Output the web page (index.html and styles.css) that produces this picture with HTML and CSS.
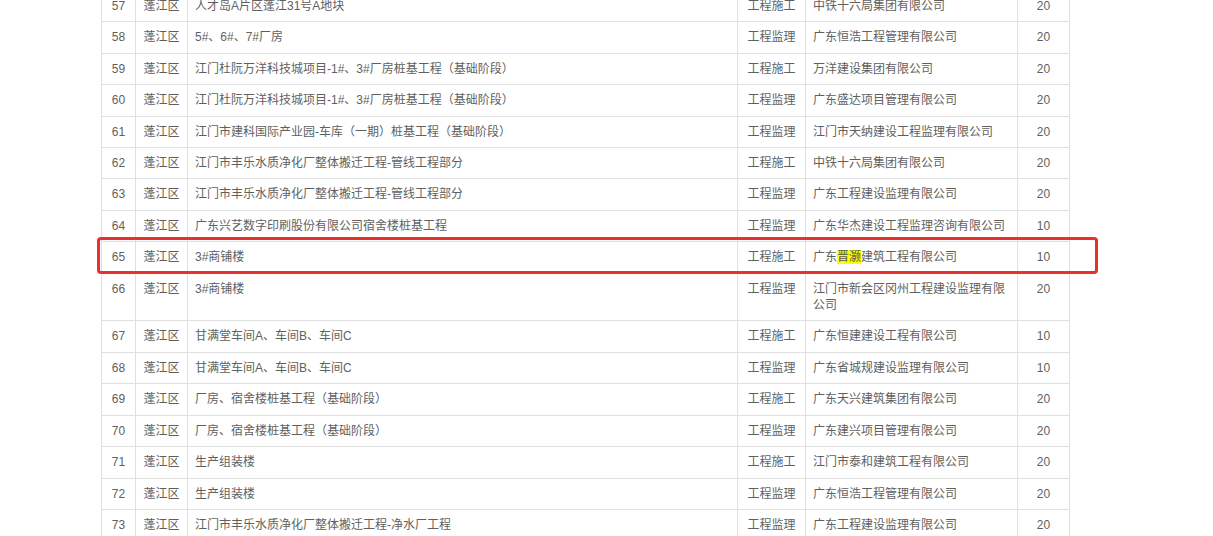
FILE: index.html
```html
<!DOCTYPE html>
<html lang="zh">
<head>
<meta charset="utf-8">
<link rel="stylesheet" href="styles.css">
</head>
<body>
<div class="wrap">
<table class="list">
<colgroup>
<col class="c-no"><col class="c-area"><col class="c-proj"><col class="c-type"><col class="c-comp"><col class="c-score">
</colgroup>
<tbody>
<tr><td class="ctr">57</td><td class="ctr">蓬江区</td><td>人才岛A片区蓬江31号A地块</td><td class="ctr">工程施工</td><td>中铁十六局集团有限公司</td><td class="ctr">20</td></tr>
<tr><td class="ctr">58</td><td class="ctr">蓬江区</td><td>5#、6#、7#厂房</td><td class="ctr">工程监理</td><td>广东恒浩工程管理有限公司</td><td class="ctr">20</td></tr>
<tr><td class="ctr">59</td><td class="ctr">蓬江区</td><td>江门杜阮万洋科技城项目-1#、3#厂房桩基工程（基础阶段）</td><td class="ctr">工程施工</td><td>万洋建设集团有限公司</td><td class="ctr">20</td></tr>
<tr><td class="ctr">60</td><td class="ctr">蓬江区</td><td>江门杜阮万洋科技城项目-1#、3#厂房桩基工程（基础阶段）</td><td class="ctr">工程监理</td><td>广东盛达项目管理有限公司</td><td class="ctr">20</td></tr>
<tr><td class="ctr">61</td><td class="ctr">蓬江区</td><td>江门市建科国际产业园-车库（一期）桩基工程（基础阶段）</td><td class="ctr">工程监理</td><td>江门市天纳建设工程监理有限公司</td><td class="ctr">20</td></tr>
<tr><td class="ctr">62</td><td class="ctr">蓬江区</td><td>江门市丰乐水质净化厂整体搬迁工程-管线工程部分</td><td class="ctr">工程施工</td><td>中铁十六局集团有限公司</td><td class="ctr">20</td></tr>
<tr><td class="ctr">63</td><td class="ctr">蓬江区</td><td>江门市丰乐水质净化厂整体搬迁工程-管线工程部分</td><td class="ctr">工程监理</td><td>广东工程建设监理有限公司</td><td class="ctr">20</td></tr>
<tr><td class="ctr">64</td><td class="ctr">蓬江区</td><td>广东兴艺数字印刷股份有限公司宿舍楼桩基工程</td><td class="ctr">工程监理</td><td>广东华杰建设工程监理咨询有限公司</td><td class="ctr">10</td></tr>
<tr><td class="ctr">65</td><td class="ctr">蓬江区</td><td>3#商铺楼</td><td class="ctr">工程施工</td><td>广东<span class="hl">晋灏</span>建筑工程有限公司</td><td class="ctr">10</td></tr>
<tr><td class="ctr">66</td><td class="ctr">蓬江区</td><td>3#商铺楼</td><td class="ctr">工程监理</td><td>江门市新会区冈州工程建设监理有限公司</td><td class="ctr">20</td></tr>
<tr><td class="ctr">67</td><td class="ctr">蓬江区</td><td>甘满堂车间A、车间B、车间C</td><td class="ctr">工程施工</td><td>广东恒建建设工程有限公司</td><td class="ctr">10</td></tr>
<tr><td class="ctr">68</td><td class="ctr">蓬江区</td><td>甘满堂车间A、车间B、车间C</td><td class="ctr">工程监理</td><td>广东省城规建设监理有限公司</td><td class="ctr">10</td></tr>
<tr><td class="ctr">69</td><td class="ctr">蓬江区</td><td>厂房、宿舍楼桩基工程（基础阶段）</td><td class="ctr">工程施工</td><td>广东天兴建筑集团有限公司</td><td class="ctr">20</td></tr>
<tr><td class="ctr">70</td><td class="ctr">蓬江区</td><td>厂房、宿舍楼桩基工程（基础阶段）</td><td class="ctr">工程监理</td><td>广东建兴项目管理有限公司</td><td class="ctr">20</td></tr>
<tr><td class="ctr">71</td><td class="ctr">蓬江区</td><td>生产组装楼</td><td class="ctr">工程施工</td><td>江门市泰和建筑工程有限公司</td><td class="ctr">20</td></tr>
<tr><td class="ctr">72</td><td class="ctr">蓬江区</td><td>生产组装楼</td><td class="ctr">工程监理</td><td>广东恒浩工程管理有限公司</td><td class="ctr">20</td></tr>
<tr><td class="ctr">73</td><td class="ctr">蓬江区</td><td>江门市丰乐水质净化厂整体搬迁工程-净水厂工程</td><td class="ctr">工程监理</td><td>广东工程建设监理有限公司</td><td class="ctr">20</td></tr>
</tbody>
</table>
<div class="mark"></div>
</div>
</body>
</html>
```
FILE: styles.css
```css
html, body {
  margin: 0;
  padding: 0;
  background: #fff;
  overflow: hidden;
}
.wrap {
  position: relative;
  margin-top: -10px;
  margin-left: 101px;
  width: 968px;
}
.list {
  border-collapse: collapse;
  table-layout: fixed;
  width: 968px;
  font-family: "Liberation Sans", "Noto Sans CJK SC", sans-serif;
  font-size: 12px;
  line-height: 16.4px;
  color: #5f5f5f;
}
.c-no { width: 34px; }
.c-area { width: 52px; }
.c-proj { width: 550px; }
.c-type { width: 68px; }
.c-comp { width: 212px; }
.c-score { width: 52px; }
.list td {
  border: 1px solid #e0e0e0;
  padding: 7px 8px 7px 7px;
  vertical-align: top;
  text-align: left;
}
.list td.ctr {
  text-align: center;
  padding-left: 2px;
  padding-right: 2px;
}
.hl {
  background: #ffff00;
  color: #555;
}
.mark {
  position: absolute;
  left: -4px;
  top: 247px;
  width: 995px;
  height: 31px;
  border: 3px solid #e8302c;
  border-radius: 4px;
  pointer-events: none;
}
```
